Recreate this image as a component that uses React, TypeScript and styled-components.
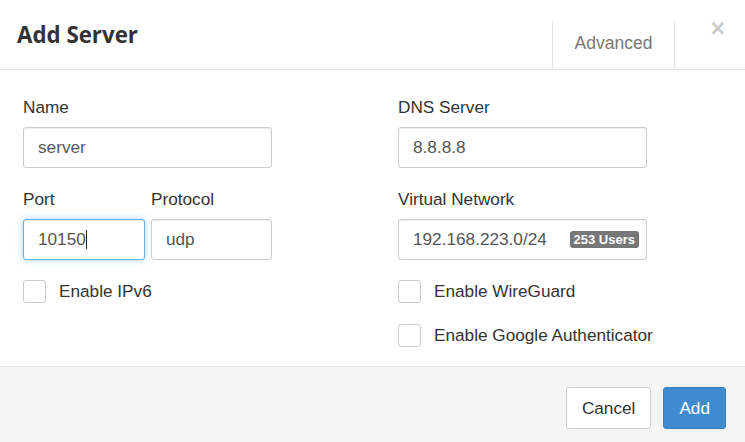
import React from "react";
import styled, { createGlobalStyle } from "styled-components";

const Global = createGlobalStyle`
  html, body { margin: 0; padding: 0; background: #ffffff; }
  body { font-family: "Liberation Sans", Arial, sans-serif; color: #333333; }
  * { box-sizing: border-box; }
`;

const Modal = styled.div`
  width: 745px;
  height: 442px;
  overflow: hidden;
  background: #ffffff;
  display: flex;
  flex-direction: column;
`;

const Header = styled.div`
  height: 70px;
  flex: none;
  display: flex;
  align-items: flex-start;
  border-bottom: 1px solid #e5e5e5;
  padding: 0 20px 0 17px;
`;

const Title = styled.h4`
  flex: 1;
  margin: 24px 0 0;
  font-family: "Open Sans", "Liberation Sans", sans-serif;
  font-weight: 700;
  font-size: 22.3px;
  line-height: 1;
  color: #333333;
`;

const Tab = styled.div`
  margin-top: 20px;
  height: 49px;
  padding: 15px 22px 0;
  border-left: 1px solid #e5e5e5;
  border-right: 1px solid #e5e5e5;
  font-size: 17.5px;
  line-height: 1;
  color: #777777;
  white-space: nowrap;
`;

const Close = styled.button`
  margin: 16px 0 0 35px;
  padding: 0;
  border: 0;
  background: transparent;
  font-family: "Liberation Sans", Arial, sans-serif;
  font-weight: 700;
  font-size: 25px;
  line-height: 1;
  color: #000000;
  opacity: 0.2;
  cursor: pointer;
`;

const Body = styled.div`
  flex: none;
  display: grid;
  grid-template-columns: 249px 249px;
  column-gap: 126px;
  padding: 25px 23px 19px;
`;

const Column = styled.div`
  display: flex;
  flex-direction: column;
  & > *:last-child {
    margin-bottom: 0;
  }
`;

const Group = styled.div<{ $mb?: number }>`
  display: flex;
  flex-direction: column;
  margin-bottom: ${(p) => (p.$mb ?? 19)}px;
  min-width: 0;
`;

const Label = styled.label`
  font-size: 17.2px;
  line-height: 24px;
  color: #333333;
  margin-bottom: 8px;
  white-space: nowrap;
`;

const SplitRow = styled.div`
  display: grid;
  grid-template-columns: 122px 121px;
  column-gap: 6px;
  margin-bottom: 20px;
`;

const Field = styled.div<{ $focus?: boolean }>`
  height: 41px;
  display: flex;
  align-items: center;
  justify-content: space-between;
  padding: 0 7px 0 14px;
  border: 1px solid ${(p) => (p.$focus ? "#66afe9" : "#cccccc")};
  border-radius: 3px;
  background: #ffffff;
  font-size: 17.2px;
  color: #555555;
  box-shadow: ${(p) =>
    p.$focus
      ? "inset 0 1px 1px rgba(0,0,0,.075), 0 0 7px rgba(102,175,233,.55)"
      : "inset 0 1px 1px rgba(0,0,0,.075)"};
`;

const Value = styled.span`
  display: inline-flex;
  align-items: center;
  white-space: nowrap;
`;

const Caret = styled.span`
  display: inline-block;
  width: 1px;
  height: 19px;
  background: #222222;
`;

const Badge = styled.span`
  background: #777777;
  color: #ffffff;
  font-weight: 700;
  font-size: 13px;
  line-height: 17px;
  padding: 0 4px;
  border-radius: 3px;
  white-space: nowrap;
`;

const CheckRow = styled.label`
  display: flex;
  align-items: center;
  gap: 13px;
  margin-bottom: 21px;
  font-size: 17.2px;
  color: #333333;
  white-space: nowrap;
`;

const Box = styled.span`
  width: 23px;
  height: 23px;
  flex: none;
  border: 1px solid #cccccc;
  border-radius: 3px;
  background: #ffffff;
`;

const Footer = styled.div`
  flex: none;
  display: flex;
  justify-content: flex-end;
  gap: 12px;
  padding: 20px 19px 20px;
  border-top: 1px solid #e5e5e5;
  background: #f4f4f4;
`;

const Button = styled.button<{ $primary?: boolean }>`
  height: 42px;
  padding: 0 15px;
  border-radius: 3px;
  font-family: "Liberation Sans", Arial, sans-serif;
  font-size: 17.2px;
  border: 1px solid ${(p) => (p.$primary ? "#3a80c0" : "#cccccc")};
  background: ${(p) => (p.$primary ? "#3f8bcd" : "#ffffff")};
  color: ${(p) => (p.$primary ? "#ffffff" : "#333333")};
  cursor: pointer;
`;

export default function App() {
  return (
    <Modal>
      <Global />
      <Header>
        <Title>Add Server</Title>
        <Tab>Advanced</Tab>
        <Close aria-label="Close">×</Close>
      </Header>
      <Body>
        <Column>
          <Group>
            <Label>Name</Label>
            <Field>
              <Value>server</Value>
            </Field>
          </Group>
          <SplitRow>
            <Group $mb={0}>
              <Label>Port</Label>
              <Field $focus>
                <Value>
                  10150
                  <Caret />
                </Value>
              </Field>
            </Group>
            <Group $mb={0}>
              <Label>Protocol</Label>
              <Field>
                <Value>udp</Value>
              </Field>
            </Group>
          </SplitRow>
          <CheckRow>
            <Box />
            Enable IPv6
          </CheckRow>
        </Column>
        <Column>
          <Group>
            <Label>DNS Server</Label>
            <Field>
              <Value>8.8.8.8</Value>
            </Field>
          </Group>
          <Group $mb={20}>
            <Label>Virtual Network</Label>
            <Field>
              <Value>192.168.223.0/24</Value>
              <Badge>253 Users</Badge>
            </Field>
          </Group>
          <CheckRow>
            <Box />
            Enable WireGuard
          </CheckRow>
          <CheckRow>
            <Box />
            Enable Google Authenticator
          </CheckRow>
        </Column>
      </Body>
      <Footer>
        <Button>Cancel</Button>
        <Button $primary>Add</Button>
      </Footer>
    </Modal>
  );
}
